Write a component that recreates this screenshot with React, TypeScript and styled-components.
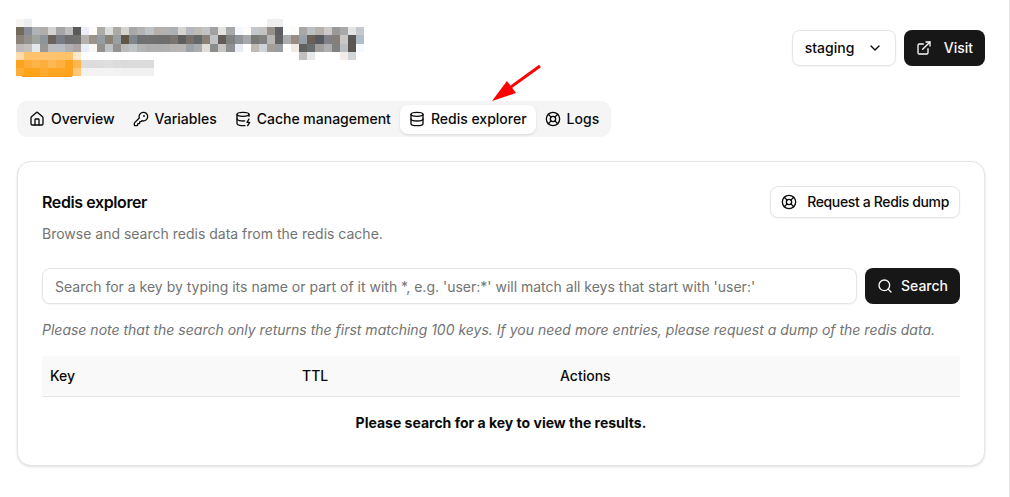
import React from 'react';
import styled, { createGlobalStyle, css } from 'styled-components';
import {
  ChevronDown,
  Database,
  DatabaseZap,
  ExternalLink,
  House,
  KeyRound,
  LifeBuoy,
  Search,
} from 'lucide-react';

const GlobalStyle = createGlobalStyle`
  *, *::before, *::after { box-sizing: border-box; }
  body {
    margin: 0;
    background: #fff;
    color: #0a0a0a;
    font-family: Inter, "Liberation Sans", sans-serif;
    font-size: 14px;
    line-height: 20px;
  }
  button, input, select { font: inherit; color: inherit; margin: 0; }
`;

const Page = styled.main`
  position: relative;
  display: flex;
  flex-direction: column;
  gap: 24px;
  min-height: 100vh;
  padding: 19px 24px 30px 16px;
  border-right: 1px solid #e5e5e5;
`;

const Header = styled.header`
  display: flex;
  justify-content: space-between;
  align-items: center;
`;

const HeaderActions = styled.div`
  display: flex;
  gap: 8px;
`;

const Mosaic = styled.svg`
  display: block;
  flex: none;
`;

const Button = styled.button<{ $variant?: 'solid' | 'outline'; $gap?: number }>`
  display: inline-flex;
  flex: none;
  align-items: center;
  justify-content: center;
  gap: ${({ $gap = 8 }) => $gap}px;
  height: 36px;
  padding: 0 12px;
  border: 0;
  border-radius: 8px;
  font-weight: 500;
  white-space: nowrap;
  cursor: pointer;
  ${({ $variant }) =>
    $variant === 'outline'
      ? css`
          height: 32px;
          padding: 0 10px;
          background: #fff;
          border: 1px solid #e5e5e5;
          box-shadow: 0 1px 2px rgba(0, 0, 0, 0.05);
          letter-spacing: -0.025em;
        `
      : css`
          background: #171717;
          color: #fafafa;
        `}
`;

const SelectBox = styled.label`
  display: grid;
  align-items: center;
  width: 104px;

  > * { grid-area: 1 / 1; }
  > svg { justify-self: end; margin-right: 13px; pointer-events: none; }
`;

const Select = styled.select`
  appearance: none;
  width: 100%;
  height: 36px;
  padding: 0 12px;
  border: 1px solid #e5e5e5;
  border-radius: 8px;
  background: #fff;
  box-shadow: 0 1px 2px rgba(0, 0, 0, 0.05);
  font-weight: 500;
`;

const Tabs = styled.nav`
  display: flex;
  align-items: center;
  align-self: flex-start;
  height: 36px;
  margin-left: 1px;
  padding: 3px;
  border-radius: 10px;
  background: #f5f5f5;
`;

const Tab = styled.button<{ $active?: boolean }>`
  display: inline-flex;
  align-items: center;
  gap: 6px;
  height: 29px;
  padding: 0 9px;
  border: 0;
  border-radius: 8px;
  background: ${({ $active }) => ($active ? '#fff' : 'transparent')};
  box-shadow: ${({ $active }) =>
    $active ? '0 1px 3px rgba(0, 0, 0, 0.1), 0 1px 2px -1px rgba(0, 0, 0, 0.1)' : 'none'};
  font-weight: 500;
  white-space: nowrap;
  cursor: pointer;
`;

const Card = styled.section`
  margin-left: 1px;
  padding: 24px;
  border: 1px solid #e5e5e5;
  border-radius: 14px;
  background: #fff;
  box-shadow: 0 1px 3px rgba(0, 0, 0, 0.1), 0 1px 2px -1px rgba(0, 0, 0, 0.1);
`;

const CardHeader = styled.div`
  display: flex;
  align-items: center;
  justify-content: space-between;
`;

const Title = styled.h1`
  margin: 0;
  font-size: 16px;
  line-height: 24px;
  font-weight: 600;
  letter-spacing: -0.025em;
`;

const Description = styled.p`
  margin: 6px 0 24px;
  color: #737373;
`;

const SearchForm = styled.form`
  display: flex;
  gap: 8px;
`;

const SearchInput = styled.input`
  flex: 1;
  min-width: 0;
  height: 36px;
  padding: 0 12px;
  border: 1px solid #e5e5e5;
  border-radius: 8px;
  background: #fff;
  box-shadow: 0 1px 2px rgba(0, 0, 0, 0.05);

  &::placeholder { color: #737373; opacity: 1; }
`;

const Note = styled.p`
  margin: 16px 0;
  color: #737373;
  font-style: italic;
`;

const Table = styled.table`
  width: 100%;
  table-layout: fixed;
  border-collapse: collapse;
`;

const HeadCell = styled.th<{ $width?: number }>`
  width: ${({ $width }) => ($width ? `${$width}px` : 'auto')};
  height: 40px;
  padding: 0 8px;
  border-bottom: 1px solid #e5e5e5;
  background: #f9f9f9;
  font-weight: 500;
  text-align: left;
`;

const EmptyCell = styled.td`
  padding: 16px 8px 8px;
  font-weight: 700;
  text-align: center;
`;

const Arrow = styled.svg`
  position: absolute;
  left: 490px;
  top: 62px;
  pointer-events: none;
`;

const HIDDEN_NAME: { y: number; h: number; from: number; cells: string }[] = [
  { y: 0, h: 8, from: 0, cells: 'f5f4f3 ecedef' },
  { y: 0, h: 8, from: 31, cells: 'eeeeee eeeeee' },
  {
    y: 8, h: 8, from: 0,
    cells:
      '72685b 868c95 aeb3b8 b0adaa d2d3d1 a6a4a5 bebebe 5a5a5a eceff7 fdfcfa adaba6 dbdddd adaaa4 d3d4d0 a8a8a8 b3b3b3 bfc2c4 b5b0ab b2b2b2 aeb1b4 d5d4d0 b4b8be bfbcb6 c2c3c4 a1a1a1 e3e2df a6a8a9 f5f7fd fdfcfa c5c8cb c4c3c1 958f8c 5d5f63 fdfefe fdfbf9 a9a8a6 bcc0c2 b6b1ab cbcac9 9a9a9a a9a9a9 e1e3e5 c5c9cd',
  },
  {
    y: 16, h: 9, from: 0,
    cells:
      '8b8177 92918d a0a29e 8d959b 6a625c 777b84 6f6f70 717171 b3b0ad 9c928c 959da4 8b8177 97a0a5 615749 7f878c 6f7072 6f7072 6e6e6e 6e6e6e 797470 5d5e5d 77706a 62676a 8b8078 c0c3c5 625b57 808282 90949a a6a8ab 7a7874 808181 b7b6b5 626262 adadad 968b85 98a0a7 6b6058 565a60 808188 867f79 c9c8c7 595653 b2bbc8',
  },
  {
    y: 25, h: 8, from: 0,
    cells:
      'bfbab7 c4c0bf e2e7ec 999694 bcbcbe babcc3 b0b0b3 aba4a2 e9edf6 f8f7f5 94908d bfc3c6 94918e bbbaba bdc4c5 b4b4b4 afafaf afafaf b1b1b1 b6b5b4 b7b6b4 9ea1a7 a9acae e1ddd7 8b8c8c c7c5c4 8e9092 e8ebf3 ffffff bfb9b1 ced3d9 a49e9a 999ca1 ffffff f0eae5 5f615f 686d70 a19d99 afafaf 808181 babec2 595653 f6f9fd',
  },
  { y: 33, h: 8, from: 0, cells: 'fedcaa fec26b fec26b fec370 fec36d fec26b fec26b fee8cd' },
  { y: 33, h: 8, from: 35, cells: 'c1c0bf e6e9ec' },
  { y: 33, h: 8, from: 40, cells: 'f2edea d3d6d9' },
  {
    y: 41, h: 8, from: 0,
    cells:
      'fea31d feae38 feb446 feae3a feb853 feb141 fea31c feb54e dcdcdc dcdcdc dddddd e1dfde dcdcdd dadada dcdcdc dcdcdc dadbdc',
  },
  {
    y: 49, h: 8, from: 0,
    cells:
      'fead37 fea31a fea31a feab2f fea622 fea524 fea31c fec677 f2f2f2 f3f3f3 f2f2f2 f3f3f3 f2f2f2 f0f0f0 f0f0f0 f0f0f0 f0f0f0',
  },
];

const NAME_COLUMNS = 43;
const edge = (column: number) => Math.round((column * 348) / NAME_COLUMNS);

function HiddenName() {
  return (
    <Mosaic width="348" height="58" viewBox="0 0 348 58" shapeRendering="crispEdges" aria-hidden="true">
      <rect x="5" y="50" width="52" height="8" rx="3" fill="#fe9a10" />
      {HIDDEN_NAME.map(({ y, h, from, cells }) =>
        cells.split(' ').map((fill, i) => (
          <rect
            key={`${y}-${from + i}`}
            x={edge(from + i)}
            y={y}
            width={edge(from + i + 1) - edge(from + i)}
            height={h}
            fill={`#${fill}`}
          />
        )),
      )}
    </Mosaic>
  );
}

const TABS = [
  { label: 'Overview', Icon: House },
  { label: 'Variables', Icon: KeyRound },
  { label: 'Cache management', Icon: DatabaseZap },
  { label: 'Redis explorer', Icon: Database, active: true },
  { label: 'Logs', Icon: LifeBuoy },
];

export default function App() {
  return (
    <>
      <GlobalStyle />
      <Page>
        <Header>
          <HiddenName />
          <HeaderActions>
            <SelectBox>
              <Select aria-label="Environment" defaultValue="staging">
                <option value="staging">staging</option>
              </Select>
              <ChevronDown size={16} />
            </SelectBox>
            <Button type="button" $gap={12}>
              <ExternalLink size={16} />
              Visit
            </Button>
          </HeaderActions>
        </Header>

        <Tabs aria-label="Sections">
          {TABS.map(({ label, Icon, active }) => (
            <Tab key={label} type="button" $active={active} aria-current={active ? 'page' : undefined}>
              <Icon size={16} />
              {label}
            </Tab>
          ))}
        </Tabs>

        <Card>
          <CardHeader>
            <Title>Redis explorer</Title>
            <Button type="button" $variant="outline" $gap={10}>
              <LifeBuoy size={16} />
              Request a Redis dump
            </Button>
          </CardHeader>
          <Description>Browse and search redis data from the redis cache.</Description>
          <SearchForm onSubmit={(event) => event.preventDefault()}>
            <SearchInput
              type="text"
              aria-label="Search for a key"
              placeholder="Search for a key by typing its name or part of it with *, e.g. 'user:*' will match all keys that start with 'user:'"
            />
            <Button type="submit">
              <Search size={16} />
              Search
            </Button>
          </SearchForm>
          <Note>
            Please note that the search only returns the first matching 100 keys. If you need more
            entries, please request a dump of the redis data.
          </Note>
          <Table>
            <thead>
              <tr>
                <HeadCell $width={252}>Key</HeadCell>
                <HeadCell $width={258}>TTL</HeadCell>
                <HeadCell>Actions</HeadCell>
              </tr>
            </thead>
            <tbody>
              <tr>
                <EmptyCell colSpan={3}>Please search for a key to view the results.</EmptyCell>
              </tr>
            </tbody>
          </Table>
        </Card>

        <Arrow width="54" height="42" viewBox="490 62 54 42" aria-hidden="true">
          <path d="M540 66 508 89" stroke="#f00" strokeWidth="3" />
          <path d="M492 101 507 81 516 93Z" fill="#f00" />
        </Arrow>
      </Page>
    </>
  );
}
